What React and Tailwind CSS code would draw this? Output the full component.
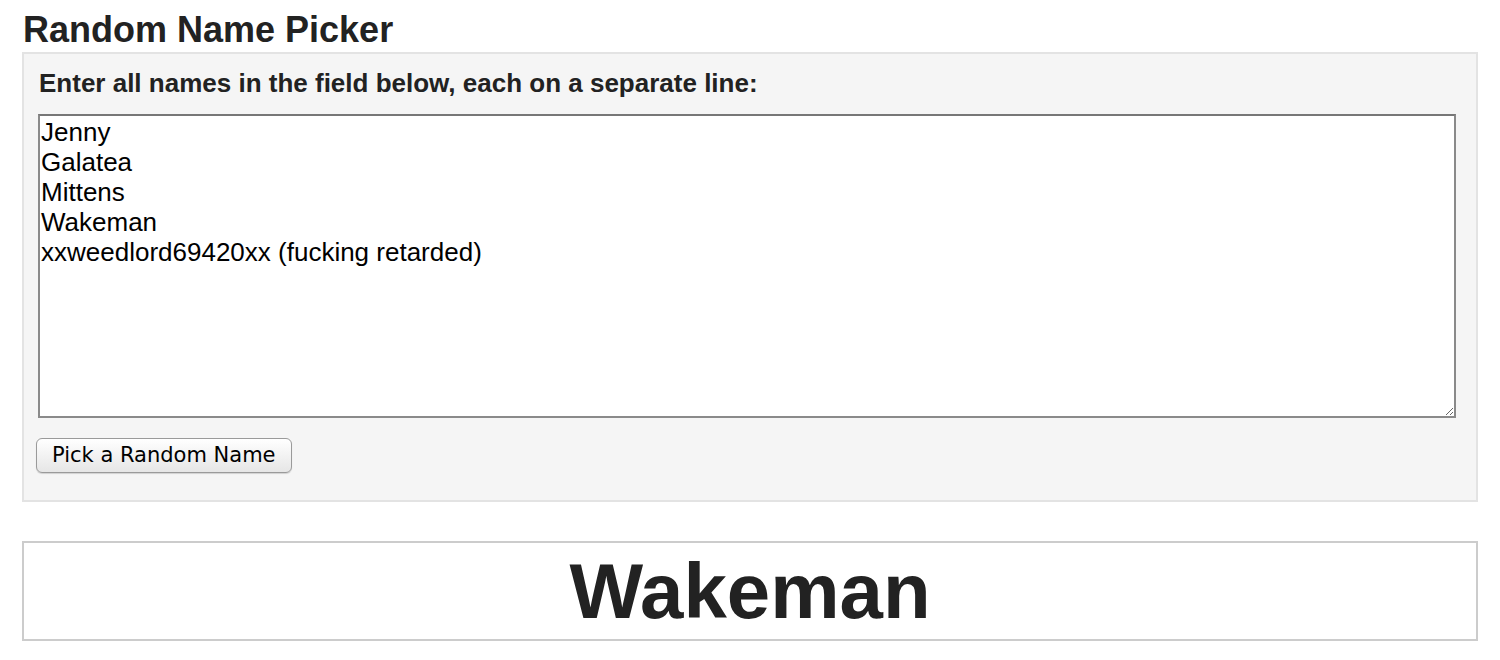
import React, { useState } from "react";

const names = [
  "Jenny",
  "Galatea",
  "Mittens",
  "Wakeman",
  "xxweedlord69420xx (fucking retarded)",
];

const App = () => {
  const [list, setList] = useState(names.join("\n"));
  const [picked, setPicked] = useState("Wakeman");

  const pick = () => {
    const items = list.split("\n").filter((n) => n.trim() !== "");
    if (items.length) setPicked(items[Math.floor(Math.random() * items.length)]);
  };

  return (
    <div className="min-h-[660px] bg-white px-[22px] pt-[12px] text-[#222] font-['Liberation_Sans',Arial,sans-serif]">
      <h1 className="mb-[4px] pl-px text-[36px] font-bold leading-[36px]">Random Name Picker</h1>
      <section className="border-2 border-[#e3e3e3] bg-[#f5f5f5] pl-[14px] pr-[20px] pt-[14px] pb-[27px]">
        <p className="pl-px text-[26px] font-bold leading-[30px]">
          Enter all names in the field below, each on a separate line:
        </p>
        <textarea
          className="mt-[16px] block h-[304px] w-full resize-y border-2 border-[#8a8a8a] border-t-[#777] bg-white px-px pt-px text-[26px] leading-[30px] text-black outline-none font-['Liberation_Sans',Arial,sans-serif]"
          value={list}
          onChange={(e) => setList(e.target.value)}
        />
        <button
          className="mt-[20px] ml-[-2px] h-[35px] rounded-[6px] border border-[#9a9a9a] bg-gradient-to-b from-white to-[#e6e6e6] px-[15px] text-[21px] leading-[33px] text-black shadow-[0_1px_1px_rgba(0,0,0,0.15)] font-['DejaVu_Sans',Verdana,sans-serif]"
          onClick={pick}
        >
          Pick a Random Name
        </button>
      </section>
      <div className="mt-[39px] flex h-[100px] items-center justify-center border-2 border-[#cccccc] bg-white">
        <span className="text-[78px] font-bold leading-none text-[#222]">{picked}</span>
      </div>
    </div>
  );
};

export default App;
